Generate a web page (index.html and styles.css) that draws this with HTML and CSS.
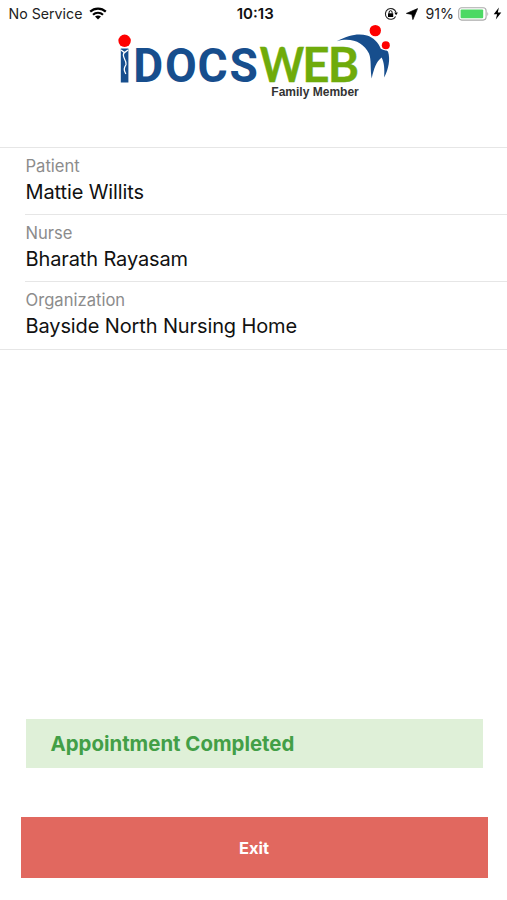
FILE: index.html
```html
<!DOCTYPE html>
<html lang="en">
<head>
    <meta charset="UTF-8">
    <meta name="viewport" content="width=device-width, initial-scale=1.0">
    <title>iDocsWeb Family Member</title>
    <link rel="stylesheet" href="styles.css">
</head>
<body>
    <div class="status-bar">
        <div class="status-left">
            <span class="carrier">No Service</span>
            <svg class="wifi" width="18" height="13" viewBox="0 0 18 13">
                <path d="M1.2 4.6C5.6.5 12.4.5 16.8 4.6M4 7.7C6.8 5.1 11.2 5.1 14 7.7" fill="none" stroke="#000" stroke-width="2.2"/>
                <path d="M9 12.6L6 9.6Q9 7.4 12 9.6Z"/>
            </svg>
        </div>
        <div class="status-time">10:13</div>
        <div class="status-right">
            <svg class="lock" width="14" height="14" viewBox="0 0 14 14">
                <path d="M11.6 9.4A5.4 5.4 0 1 1 12 5.4" fill="none" stroke="#222" stroke-width="1.1"/>
                <path d="M10.3 5.6H13.9L12.1 8.2Z"/>
                <path d="M4 6.3H9.2V10H4Z"/>
                <path d="M5.1 6.5V5.2A1.5 1.5 0 0 1 8.1 5.2V6.5" fill="none" stroke="#000" stroke-width="1"/>
            </svg>
            <svg class="arrow" width="12" height="12" viewBox="0 0 12 12">
                <path d="M11.6.6L.4 5.4 5.8 6.4 6.9 11.6Z" stroke="#000" stroke-width=".7"/>
            </svg>
            <span class="percent">91%</span>
            <svg class="battery" width="32" height="14" viewBox="0 0 32 14">
                <rect x=".7" y=".7" width="27.4" height="12.4" rx="3" fill="#fff" stroke="#aaa" stroke-width="1.1"/>
                <rect x="2.6" y="2.5" width="22.6" height="8.8" rx="1" fill="#4cd964"/>
                <path d="M29.4 4.8Q31.2 7 29.4 9.2Z" fill="#aaa"/>
            </svg>
            <svg class="bolt" width="9" height="13" viewBox="0 0 9 13">
                <path d="M5.9.6L.7 7.3H4.1L2.8 12.4 8.3 5.5H4.8Z"/>
            </svg>
        </div>
    </div>

    <div class="header">
        <svg class="logo" width="280" height="80" viewBox="115 23 280 80">
            <rect x="120.8" y="48.5" width="7.6" height="34" fill="#174e8d"/>
            <circle cx="124.6" cy="40.8" r="6.2" fill="#fe0000"/>
            <path d="M121 50L124.5 52.6 128 50M124.5 52.6C120.5 56 127 60 126 64.5 124 68 123.4 70 125.8 74" fill="none" stroke="#fff" stroke-width="1.3"/>
            <text class="logo-docs" transform="translate(133.2 82.3) scale(.97 1)" x="0 32.8 66.3 99.2" y="0">DOCS</text>
            <text class="logo-web" transform="translate(259.8 82.2) scale(.89 1)" x="0" y="0">W</text>
            <text class="logo-web" transform="translate(302.2 82.2)" x="0 25.6" y="0">EB</text>
            <path d="M336.7 41.2C348 35 359 32.8 367 35.6 373 37.5 378.5 42.5 380.8 48.8 384 50.8 386 49.8 388 51.5 390.5 59.5 388.6 69 384.2 77.4 384.6 69 384.4 63 381.6 57.6 376.4 61.5 373.8 69 371.7 78.4 370 69 371.6 60 369 53.5 363.5 42.5 352 37 336.7 41.2Z" fill="#174e8d"/>
            <circle cx="375.3" cy="30.6" r="5.7" fill="#fe0000"/>
            <circle cx="385.8" cy="45.3" r="4" fill="#fe0000"/>
            <text class="logo-sub" x="271.3" y="96.3" textLength="87.5" lengthAdjust="spacingAndGlyphs">Family Member</text>
        </svg>
    </div>

    <div class="details">
        <div class="detail-row">
            <div class="label">Patient</div>
            <div class="value">Mattie Willits</div>
        </div>
        <div class="detail-row">
            <div class="label">Nurse</div>
            <div class="value">Bharath Rayasam</div>
        </div>
        <div class="detail-row">
            <div class="label">Organization</div>
            <div class="value">Bayside North Nursing Home</div>
        </div>
    </div>

    <div class="footer">
        <div class="alert-success">Appointment Completed</div>
        <button class="btn-exit" type="button">Exit</button>
    </div>
</body>
</html>
```
FILE: styles.css
```css
* {
    box-sizing: border-box;
}
body {
    font-family: Inter, "Liberation Sans", sans-serif;
    background: #fff;
    color: #111;
    height: 900px;
    margin: 0;
    display: flex;
    flex-direction: column;
}
.status-bar {
    display: grid;
    grid-template-columns: 1fr auto 1fr;
    align-items: center;
    height: 23px;
    padding: 4px 5px 0 8.5px;
    font-size: 14.2px;
    color: #222;
}
.status-left, .status-right {
    display: flex;
    align-items: center;
}
.status-right {
    justify-content: flex-end;
}
.wifi {
    margin-left: 7px;
}
.status-time {
    font-size: 15px;
    font-weight: 600;
    color: #111;
}
.arrow {
    margin: 0 8px;
}
.battery {
    margin: 0 3px 0 4px;
}
.header {
    height: 124px;
    padding-left: 115px;
}
.logo {
    display: block;
}
.logo-docs {
    font-family: Roboto, sans-serif;
    font-size: 47.5px;
    font-weight: 700;
    fill: #174e8d;
}
.logo-web {
    font-family: Lato, sans-serif;
    font-size: 47.5px;
    font-weight: 700;
    fill: #6fab0b;
    stroke: #6fab0b;
    stroke-width: .4px;
}
.logo-sub {
    font-family: "Liberation Sans", Arial, sans-serif;
    font-size: 12px;
    font-weight: 700;
    fill: #333;
}
.details {
    border-top: 1px solid #e6e6e6;
    border-bottom: 1px solid #e6e6e6;
    padding-left: 25px;
}
.detail-row {
    height: 67px;
    padding: 8px 0 0 .5px;
    border-bottom: 1px solid #e6e6e6;
}
.detail-row:last-child {
    border-bottom: none;
}
.label {
    font-size: 16.6px;
    line-height: 20px;
    color: #8c8c8c;
}
.value {
    font-size: 20px;
    line-height: 24px;
    letter-spacing: -.12px;
    margin-top: 4px;
    color: #111;
}
.footer {
    margin-top: auto;
    padding: 0 19.5px 22px 20.5px;
}
.alert-success {
    height: 49px;
    margin: 0 4.5px 49px 5px;
    padding-left: 25px;
    background: #dff0d8;
    color: #439f47;
    font-size: 20.4px;
    font-weight: 700;
    line-height: 50px;
}
.btn-exit {
    display: block;
    width: 100%;
    height: 61px;
    padding: 0;
    border: none;
    background: #e1685f;
    color: #fff;
    font-family: inherit;
    font-size: 16.5px;
    font-weight: 700;
}
```
